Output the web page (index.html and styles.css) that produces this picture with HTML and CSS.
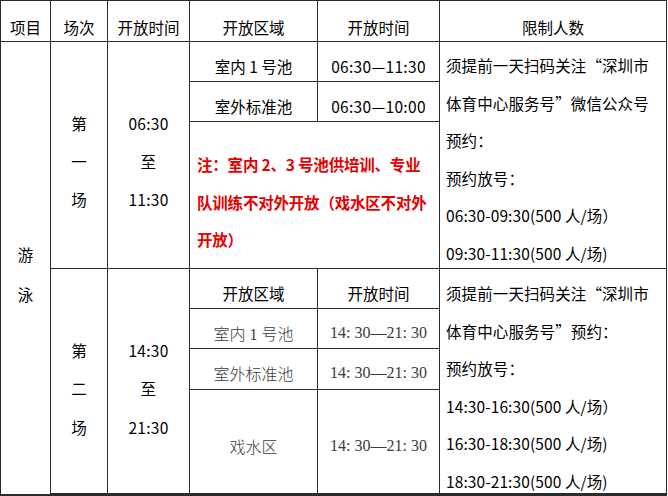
FILE: index.html
```html
<!DOCTYPE html>
<html lang="zh-CN">
<head>
<meta charset="utf-8">
<title>游泳开放时间</title>
<link rel="stylesheet" href="styles.css">
</head>
<body>
<div class="table">
  <div class="c hd col1">项目</div>
  <div class="c hd col2">场次</div>
  <div class="c hd col3">开放时间</div>
  <div class="c hd col4">开放区域</div>
  <div class="c hd col5">开放时间</div>
  <div class="c hd col6">限制人数</div>

  <div class="c stack swim">游<br>泳</div>

  <div class="c stack s1 col2">第<br>一<br>场</div>
  <div class="c stack s1 col3 num">06:30<br>至<br>11:30</div>
  <div class="c one ra col4">室内 1 号池</div>
  <div class="c one ra col5 num">06:30—11:30</div>
  <div class="c one rb col4">室外标准池</div>
  <div class="c one rb col5 num">06:30—10:00</div>
  <div class="c note">注：室内 2、3 号池供培训、专业<br>队训练不对外开放（戏水区不对外<br>开放）</div>
  <div class="c text t1">
    <div class="ln">须提前一天扫码关注“深圳市</div>
    <div class="ln">体育中心服务号”微信公众号</div>
    <div class="ln">预约：</div>
    <div class="ln">预约放号：</div>
    <div class="ln">06:30-09:30(500 人/场）</div>
    <div class="ln">09:30-11:30(500 人/场)</div>
  </div>

  <div class="c stack s2 col2">第<br>二<br>场</div>
  <div class="c stack s2 col3 num">14:30<br>至<br>21:30</div>
  <div class="c one rc col4">开放区域</div>
  <div class="c one rc col5">开放时间</div>
  <div class="c one serif rd col4">室内 1 号池</div>
  <div class="c one serif rd col5">14: 30—21: 30</div>
  <div class="c one serif re col4">室外标准池</div>
  <div class="c one serif re col5">14: 30—21: 30</div>
  <div class="c one serif rf col4">戏水区</div>
  <div class="c one serif rf col5">14: 30—21: 30</div>
  <div class="c text t2">
    <div class="ln">须提前一天扫码关注“深圳市</div>
    <div class="ln">体育中心服务号”预约：</div>
    <div class="ln">预约放号：</div>
    <div class="ln">14:30-16:30(500 人/场）</div>
    <div class="ln">16:30-18:30(500 人/场)</div>
    <div class="ln">18:30-21:30(500 人/场)</div>
  </div>
</div>
</body>
</html>
```
FILE: styles.css
```css
html, body {
  margin: 0;
  padding: 0;
  background: #fff;
}
body {
  font-family: "Noto Sans CJK SC", "Liberation Sans", sans-serif;
  font-size: 15.5px;
  font-weight: 400;
  color: #000;
}
.table {
  display: grid;
  width: max-content;
  grid-template-columns: 49px 56px 81px 127px 121px 226px;
  grid-template-rows: 40px 39px 39px 146px 39px 39px 40px 103px;
  gap: 1px;
  background: #2b2b2b;
  border: 1px solid #2b2b2b;
  border-bottom-width: 2px;
}
.c {
  background: #fff;
  display: flex;
  align-items: center;
  justify-content: center;
  text-align: center;
  box-sizing: border-box;
  overflow: hidden;
  white-space: nowrap;
}
.num { letter-spacing: 0.3px; }
.hd { grid-row: 1; padding-top: 11px; }
.col1 { grid-column: 1; }
.col2 { grid-column: 2; }
.col3 { grid-column: 3; }
.col4 { grid-column: 4; }
.col5 { grid-column: 5; }
.col6 { grid-column: 6; }

.stack { line-height: 38px; }
.swim { grid-column: 1; grid-row: 2 / 10; line-height: 40px; padding-top: 12px; }
.s1 { grid-row: 2 / 5; padding-top: 11px; }
.s2 { grid-row: 5 / 9; padding-top: 15px; line-height: 38.5px; }

.one { padding-top: 8px; }
.ra { grid-row: 2; }
.rb { grid-row: 3; }
.rc { grid-row: 5; }
.rd { grid-row: 6; }
.re { grid-row: 7; }
.rf { grid-row: 8; }

.serif {
  font-family: "Liberation Serif", "Noto Sans CJK SC", serif;
  font-weight: 300;
  font-size: 16px;
  color: #3a3a3a;
}

.note {
  grid-column: 4 / 6;
  grid-row: 4;
  justify-content: flex-start;
  align-items: flex-start;
  text-align: left;
  padding: 24px 0 0 7px;
  line-height: 37.5px;
  color: #e60000;
  font-weight: 700;
  letter-spacing: -0.2px;
}

.text {
  grid-column: 6;
  flex-direction: column;
  align-items: flex-start;
  justify-content: flex-start;
  text-align: left;
  padding-left: 6px;
  letter-spacing: 0.1px;
}
.t1 { grid-row: 2 / 5; padding-top: 5px; }
.t2 { grid-row: 5 / 9; padding-top: 6px; }
.ln { line-height: 37.6px; }
```
